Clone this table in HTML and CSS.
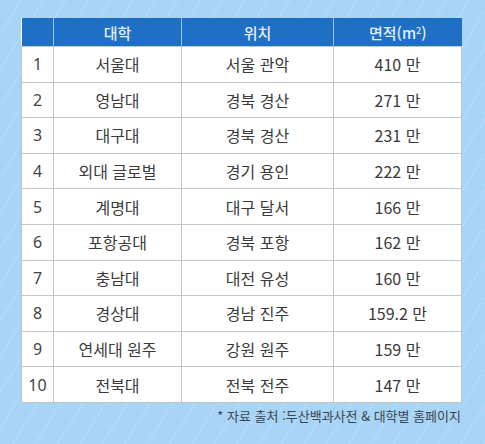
FILE: index.html
```html
<!DOCTYPE html>
<html lang="ko">
<head>
    <meta charset="UTF-8">
    <meta name="viewport" content="width=device-width, initial-scale=1.0">
    <title>대학 면적 순위</title>
    <link rel="stylesheet" href="styles.css">
</head>
<body>
    <div class="page">
        <table class="rank-table">
            <colgroup>
                <col class="col-no">
                <col class="col-name">
                <col class="col-loc">
                <col class="col-area">
            </colgroup>
            <thead>
                <tr>
                    <th></th>
                    <th>대학</th>
                    <th>위치</th>
                    <th>면적(m<sup>2</sup>)</th>
                </tr>
            </thead>
            <tbody>
                <tr><td class="no">1</td><td>서울대</td><td>서울 관악</td><td>410 만</td></tr>
                <tr><td class="no">2</td><td>영남대</td><td>경북 경산</td><td>271 만</td></tr>
                <tr><td class="no">3</td><td>대구대</td><td>경북 경산</td><td>231 만</td></tr>
                <tr><td class="no">4</td><td>외대 글로벌</td><td>경기 용인</td><td>222 만</td></tr>
                <tr><td class="no">5</td><td>계명대</td><td>대구 달서</td><td>166 만</td></tr>
                <tr><td class="no">6</td><td>포항공대</td><td>경북 포항</td><td>162 만</td></tr>
                <tr><td class="no">7</td><td>충남대</td><td>대전 유성</td><td>160 만</td></tr>
                <tr><td class="no">8</td><td>경상대</td><td>경남 진주</td><td>159.2 만</td></tr>
                <tr><td class="no">9</td><td>연세대 원주</td><td>강원 원주</td><td>159 만</td></tr>
                <tr><td class="no">10</td><td>전북대</td><td>전북 전주</td><td>147 만</td></tr>
            </tbody>
        </table>
        <p class="source">* 자료 출처 :두산백과사전 &amp; 대학별 홈페이지</p>
    </div>
</body>
</html>
```

FILE: styles.css
```css
:root {
    --header-blue: #1f6fc4;
    --line-gray: #c4c4c4;
    --text-dark: #3a3a3a;
}

body {
    margin: 0;
    width: 485px;
    height: 444px;
    overflow: hidden;
    background-color: #a8d4f6;
    background-image: repeating-linear-gradient(122deg,
        rgba(255,255,255,0) 0px,
        rgba(255,255,255,0) 17px,
        rgba(255,255,255,0.18) 18px,
        rgba(255,255,255,0) 19px);
    font-family: "Noto Sans CJK KR", "Noto Sans", sans-serif;
    color: var(--text-dark);
}

.page {
    padding: 18px 24px 0 21px;
}

.rank-table {
    width: 440px;
    border-collapse: collapse;
    table-layout: fixed;
    background: white;
}

.col-no { width: 32px; }
.col-name { width: 128px; }
.col-loc { width: 152px; }
.col-area { width: 128px; }

.rank-table th {
    height: 28px;
    padding: 0;
    background: var(--header-blue);
    color: #e4eefa;
    font-size: 15px;
    font-weight: 500;
    border-left: 1px solid #9fc1e6;
    border-right: 1px solid #9fc1e6;
}

.rank-table th:first-child {
    border-left: none;
}

.rank-table th:last-child {
    border-right: none;
}

.rank-table sup {
    font-size: 9px;
    vertical-align: 5px;
    line-height: 0;
}

.rank-table td {
    height: 34.6px;
    padding: 0;
    text-align: center;
    font-size: 16px;
    border: 1px solid var(--line-gray);
}

.rank-table td.no {
    font-family: "Noto Sans", sans-serif;
    font-weight: 400;
    font-size: 16px;
    color: #444;
}

.source {
    margin: 3px 0 0;
    width: 440px;
    text-align: right;
    font-size: 13px;
    color: #3d4650;
}
```
